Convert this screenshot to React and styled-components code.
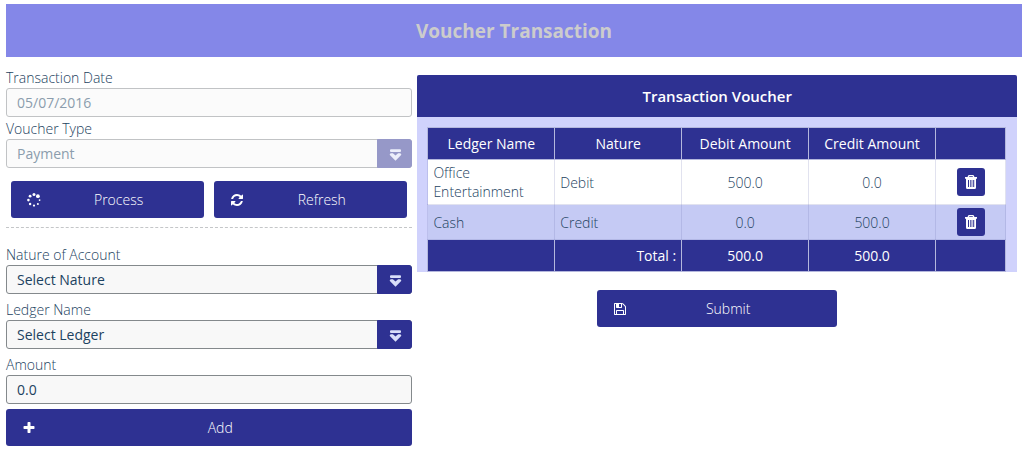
import React from "react";
import styled, { createGlobalStyle, css } from "styled-components";

const navy = "#2e3192";
const ink = "#1c4260";

const GlobalStyle = createGlobalStyle`
  * { box-sizing: border-box; }
  body {
    margin: 0;
    background: #fff;
    color: ${ink};
    font: 300 14px/20px "Open Sans", "Noto Sans", sans-serif;
  }
  button, input, select { font: inherit; color: inherit; margin: 0; }
`;

const Page = styled.main`
  padding: 4px 5px 24px 6px;
`;

const Banner = styled.h1`
  margin: 0;
  padding: 14px 0 13px;
  background: #8487e8;
  color: #cccccc;
  font-size: 19px;
  line-height: 26px;
  font-weight: 700;
  text-align: center;
`;

const Columns = styled.div`
  display: grid;
  grid-template-columns: 2fr 3fr;
  align-items: start;
`;

const FormColumn = styled.form`
  display: flex;
  flex-direction: column;
  padding-top: 11px;
`;

const FieldGroup = styled.div`
  display: flex;
  flex-direction: column;
  gap: ${(p) => p.$gap};
`;

const Field = styled.div`
  display: flex;
  flex-direction: column;
`;

const Label = styled.label`
  color: ${ink};
`;

const fieldBox = css`
  width: 100%;
  height: 29px;
  padding: 0 10px;
  border: 1px solid #84898c;
  border-radius: 3px;
  background: #f8f8f8;
  color: ${ink};
  font-weight: 500;
  opacity: 1;
  &:disabled {
    border-color: #c1c3c5;
    background: #fbfbfb;
    color: #8b9dad;
    font-weight: 400;
  }
`;

const TextInput = styled.input`
  ${fieldBox}
`;

const SelectWrap = styled.div`
  position: relative;
  display: flex;
`;

const Select = styled.select`
  ${fieldBox}
  appearance: none;
`;

const SelectArrow = styled.span`
  position: absolute;
  top: 0;
  right: 0;
  bottom: 0;
  width: 35px;
  display: flex;
  align-items: center;
  justify-content: center;
  padding: 2px 0 0 2px;
  border: 1px solid ${(p) => (p.$muted ? "#9698c8" : navy)};
  border-radius: 0 3px 3px 0;
  background: ${(p) => (p.$muted ? "#9698c8" : navy)};
  color: ${(p) => (p.$muted ? "#eceefa" : "#d9defa")};
  pointer-events: none;
`;

const ActionButton = styled.button`
  display: grid;
  grid-template-columns: 14px 1fr;
  align-items: center;
  gap: 10px;
  width: ${(p) => p.$width || "auto"};
  height: 37px;
  padding: 0 18px 0 16px;
  border: 0;
  border-radius: 3px;
  background: ${navy};
  color: #fff;
  text-align: center;
`;

const ButtonPair = styled.div`
  display: grid;
  grid-template-columns: 1fr 1fr;
  gap: 10px;
  padding: 13px 5px 9px;
`;

const Divider = styled.hr`
  width: 100%;
  margin: 0 0 17px;
  border: 0;
  border-top: 1px dashed #c4c6c8;
`;

const AddRow = styled.div`
  display: grid;
  padding-top: 5px;
`;

const VoucherColumn = styled.section`
  padding: 18px 5px 0;
`;

const Panel = styled.div`
  background: #d0d2fc;
  border-radius: 2px 2px 0 0;
`;

const PanelTitle = styled.h2`
  margin: 0;
  padding: 11px 0;
  border-radius: 2px 2px 0 0;
  background: ${navy};
  color: #fff;
  font-size: 15px;
  line-height: 20px;
  font-weight: 600;
  text-align: center;
`;

const PanelBody = styled.div`
  padding: 10px 11px 0 10px;
`;

const Table = styled.table`
  width: 100%;
  table-layout: fixed;
  border-collapse: collapse;
  line-height: 19px;
`;

const ActionCol = styled.col`
  width: 70px;
`;

const DarkCell = styled.th`
  height: 32px;
  padding: 0 5px;
  border: 1px solid #b4b7dd;
  background: ${navy};
  color: #fff;
  font-weight: 500;
  text-align: ${(p) => p.$align || "center"};
`;

const BodyRow = styled.tr`
  height: ${(p) => p.$height};
  background: ${(p) => (p.$shaded ? "#c5caf4" : "#fff")};
`;

const Cell = styled.td`
  padding: 0 5px;
  border: 1px solid rgba(120, 125, 180, 0.22);
  text-align: ${(p) => p.$align || "center"};
`;

const IconButton = styled.button`
  display: inline-flex;
  align-items: center;
  justify-content: center;
  width: 28px;
  height: 28px;
  padding: 0;
  border: 0;
  border-radius: 3px;
  background: ${navy};
  color: #fff;
  vertical-align: middle;
`;

const SubmitRow = styled.div`
  display: flex;
  justify-content: center;
  padding-top: 18px;
`;

const GLYPHS = {
  refresh:
    "M1639 1056q0 5-1 7-64 268-268 434.500t-478 166.500q-146 0-282.500-55t-243.500-157l-129 129q-19 19-45 19t-45-19-19-45v-448q0-26 19-45t45-19h448q26 0 45 19t19 45-19 45l-137 137q71 66 161 102t187 36q134 0 250-65t186-179q11-17 53-117 8-23 30-23h192q13 0 22.500 9.500t9.500 22.500zm25-800v448q0 26-19 45t-45 19h-448q-26 0-45-19t-19-45 19-45l138-138q-148-137-349-137-134 0-250 65t-186 179q-11 17-53 117-8 23-30 23h-199q-13 0-22.500-9.500t-9.500-22.500v-7q65-268 270-434.500t480-166.500q146 0 284 55.500t245 156.500l130-129q19-19 45-19t45 19 19 45z",
  plus:
    "M1600 736v192q0 40-28 68t-68 28h-416v416q0 40-28 68t-68 28h-192q-40 0-68-28t-28-68v-416h-416q-40 0-68-28t-28-68v-192q0-40 28-68t68-28h416v-416q0-40 28-68t68-28h192q40 0 68 28t28 68v416h416q40 0 68 28t28 68z",
  save:
    "M512 1536h768v-384h-768v384zm896 0h128v-896q0-14-10-38.500t-20-34.500l-281-281q-10-10-34-20t-39-10v416q0 40-28 68t-68 28h-576q-40 0-68-28t-28-68v-416h-128v1280h128v-416q0-40 28-68t68-28h832q40 0 68 28t28 68v416zm-384-928v-320q0-13-9.500-22.500t-22.500-9.500h-192q-13 0-22.500 9.500t-9.500 22.500v320q0 13 9.500 22.500t22.500 9.500h192q13 0 22.500-9.500t9.500-22.500zm640 32v928q0 40-28 68t-68 28h-1344q-40 0-68-28t-28-68v-1344q0-40 28-68t68-28h928q40 0 88 20t76 48l280 280q28 28 48 76t20 88z",
};

function Glyph({ name, size = 14 }) {
  return (
    <svg width={size} height={size} viewBox="0 0 1792 1792" fill="currentColor" aria-hidden="true">
      <path d={GLYPHS[name]} />
    </svg>
  );
}

function TrashIcon() {
  return (
    <svg width="14" height="14" viewBox="0 0 14 14" fill="currentColor" aria-hidden="true">
      <path
        fillRule="evenodd"
        d="M5 0h4q0.600 0 0.800 0.500L10.500 2H13v1.800h-1V12.500q0 1.500-1.400 1.500H3.400Q2 14 2 12.500V3.800H1V2h2.500L4.200 0.500Q4.400 0 5 0zM5.400 1.200 5 2h4l-0.400-0.800zM4 5v7h1V5zM6 5v7h0.700V5zM7.600 5v7h0.700V5zM9.200 5v7h1V5z"
      />
    </svg>
  );
}

function SpinnerIcon() {
  return (
    <svg width="14" height="14" viewBox="0 0 14 14" fill="currentColor" aria-hidden="true">
      <circle cx="7" cy="1.600" r="1.500" />
      <circle cx="10.900" cy="3.200" r="1.900" />
      <circle cx="12.600" cy="7.100" r="0.900" />
      <circle cx="10.900" cy="11" r="1" />
      <circle cx="7" cy="12.600" r="1.100" />
      <circle cx="3.100" cy="11" r="1.200" />
      <circle cx="1.400" cy="7.100" r="1.300" />
      <circle cx="3.100" cy="3.200" r="1.400" />
    </svg>
  );
}

function DropIcon() {
  return (
    <svg width="13" height="12" viewBox="0 0 13 12" fill="currentColor" aria-hidden="true">
      <rect x="1" y="0.300" width="11" height="2.600" rx="1" />
      <path d="M1.600 4.300h2.300L6.500 6.600l2.600-2.300h2.300l1 1.500-5.900 6-5.900-6z" />
    </svg>
  );
}

function SelectField({ id, label, value, disabled }) {
  return (
    <Field>
      <Label htmlFor={id}>{label}</Label>
      <SelectWrap>
        <Select id={id} defaultValue={value} disabled={disabled}>
          <option>{value}</option>
        </Select>
        <SelectArrow $muted={disabled}>
          <DropIcon />
        </SelectArrow>
      </SelectWrap>
    </Field>
  );
}

function TextField({ id, label, value, disabled }) {
  return (
    <Field>
      <Label htmlFor={id}>{label}</Label>
      <TextInput id={id} type="text" defaultValue={value} disabled={disabled} />
    </Field>
  );
}

const entries = [
  { ledger: "Office Entertainment", nature: "Debit", debit: "500.0", credit: "0.0", height: "45px" },
  { ledger: "Cash", nature: "Credit", debit: "0.0", credit: "500.0", height: "35px" },
];

export default function App() {
  return (
    <>
      <GlobalStyle />
      <Page>
        <Banner>Voucher Transaction</Banner>
        <Columns>
          <FormColumn onSubmit={(e) => e.preventDefault()}>
            <FieldGroup $gap="2px">
              <TextField id="date" label="Transaction Date" value="05/07/2016" disabled />
              <SelectField id="type" label="Voucher Type" value="Payment" disabled />
            </FieldGroup>
            <ButtonPair>
              <ActionButton type="button">
                <SpinnerIcon />
                <span>Process</span>
              </ActionButton>
              <ActionButton type="button">
                <Glyph name="refresh" />
                <span>Refresh</span>
              </ActionButton>
            </ButtonPair>
            <Divider />
            <FieldGroup $gap="6px">
              <SelectField id="nature" label="Nature of Account" value="Select Nature" />
              <SelectField id="ledger" label="Ledger Name" value="Select Ledger" />
              <TextField id="amount" label="Amount" value="0.0" />
            </FieldGroup>
            <AddRow>
              <ActionButton type="button">
                <Glyph name="plus" />
                <span>Add</span>
              </ActionButton>
            </AddRow>
          </FormColumn>

          <VoucherColumn>
            <Panel>
              <PanelTitle>Transaction Voucher</PanelTitle>
              <PanelBody>
                <Table>
                  <colgroup>
                    <col span="4" />
                    <ActionCol />
                  </colgroup>
                  <thead>
                    <tr>
                      <DarkCell scope="col">Ledger Name</DarkCell>
                      <DarkCell scope="col">Nature</DarkCell>
                      <DarkCell scope="col">Debit Amount</DarkCell>
                      <DarkCell scope="col">Credit Amount</DarkCell>
                      <DarkCell as="td" />
                    </tr>
                  </thead>
                  <tbody>
                    {entries.map((row, i) => (
                      <BodyRow key={row.ledger} $height={row.height} $shaded={i % 2 === 1}>
                        <Cell $align="left">{row.ledger}</Cell>
                        <Cell $align="left">{row.nature}</Cell>
                        <Cell>{row.debit}</Cell>
                        <Cell>{row.credit}</Cell>
                        <Cell>
                          <IconButton type="button" aria-label={`Delete ${row.ledger}`}>
                            <TrashIcon />
                          </IconButton>
                        </Cell>
                      </BodyRow>
                    ))}
                  </tbody>
                  <tfoot>
                    <tr>
                      <DarkCell as="td" />
                      <DarkCell scope="row" $align="right">Total :</DarkCell>
                      <DarkCell as="td">500.0</DarkCell>
                      <DarkCell as="td">500.0</DarkCell>
                      <DarkCell as="td" />
                    </tr>
                  </tfoot>
                </Table>
              </PanelBody>
            </Panel>
            <SubmitRow>
              <ActionButton type="button" $width="40%">
                <Glyph name="save" />
                <span>Submit</span>
              </ActionButton>
            </SubmitRow>
          </VoucherColumn>
        </Columns>
      </Page>
    </>
  );
}
